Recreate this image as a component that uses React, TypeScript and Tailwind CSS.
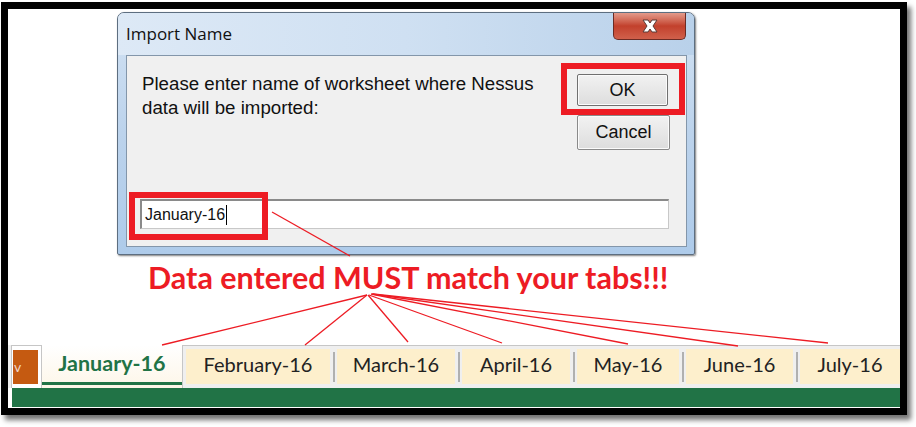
import React from "react";

const tabs = [
  { name: "February-16", w: "w-[144px]" },
  { name: "March-16", w: "w-[118px]" },
  { name: "April-16", w: "w-[108px]" },
  { name: "May-16", w: "w-[102px]" },
  { name: "June-16", w: "w-[107px]" },
  { name: "July-16", w: "w-[100px]" },
];

export default function App() {
  return (
    <div className="relative w-[916px] h-[427px] bg-white pl-[1px] pt-[2px]">
      <div className="w-[906px] h-[413px] border-[7px] border-black bg-white shadow-[4px_5px_5px_rgba(0,0,0,0.55)] flex flex-col">
        {/* Dialog */}
        <div className="ml-[109px] mt-[3px] w-[578px] h-[243px] rounded-t-[7px] rounded-b-[2px] border border-[#5d6e80] bg-gradient-to-b from-[#d2e2f3] via-[#bcd3ec] to-[#aecbea] flex flex-col shadow-[1px_1px_2px_rgba(0,0,0,0.5)]">
          <div className="h-[42px] flex items-start justify-between bg-gradient-to-r from-[#dde9f6] via-[#cfe0f2] to-[#b9d1ea] rounded-t-[6px]">
            <span
              className="pl-[8px] pt-[10px] text-[17px] leading-[22px] text-[#111]"
              style={{ fontFamily: '"Open Sans", "Noto Sans", sans-serif' }}
            >
              Import Name
            </span>
            <div className="mr-[8px] w-[73px] h-[27px] rounded-b-[5px] border border-t-0 border-[#6b2b24] bg-gradient-to-b from-[#e39a8b] via-[#c2402c] to-[#d0604b] flex items-center justify-center">
              <svg width="20" height="14" viewBox="0 0 20 14">
                <path
                  d="M3 1 L8 1 L10 4 L12 1 L17 1 L13 7 L17 13 L12 13 L10 10 L8 13 L3 13 L7 7 Z"
                  fill="#ffffff"
                  stroke="#5a3a36"
                  strokeWidth="1"
                  strokeLinejoin="round"
                />
              </svg>
            </div>
          </div>
          <div className="mx-[7px] ml-[8px] mb-[7px] flex-1 border border-[#8396aa] bg-[#f0f0f0] flex flex-col">
            <div className="flex justify-between">
              <p
                className="pl-[15px] pt-[16px] text-[18.7px] leading-[24px] text-[#111]"
                style={{ fontFamily: '"Liberation Sans", Arial, sans-serif' }}
              >
                Please enter name of worksheet where Nessus
                <br />
                data will be imported:
              </p>
              <div className="mr-[1px] mt-[7px] flex flex-col">
                <div className="border-[6px] border-[#ed1c24] pl-[10px] pr-[11px] pt-[5px] pb-[3px]">
                  <div
                    className="w-[91px] h-[32px] border border-[#707070] rounded-[2px] bg-gradient-to-b from-[#f2f2f2] to-[#dddddd] flex items-center justify-center text-[18px] text-[#111] shadow-[inset_0_0_0_1px_#fbfbfb]"
                    style={{ fontFamily: '"Liberation Sans", Arial, sans-serif' }}
                  >
                    OK
                  </div>
                </div>
                <div
                  className="ml-[16px] w-[93px] h-[35px] border border-[#8a8a8a] rounded-[2px] bg-gradient-to-b from-[#f2f2f2] to-[#dddddd] flex items-center justify-center text-[18px] text-[#111] shadow-[inset_0_0_0_1px_#fbfbfb]"
                  style={{ fontFamily: '"Liberation Sans", Arial, sans-serif' }}
                >
                  Cancel
                </div>
              </div>
            </div>
            <div className="flex-1" />
            <div className="ml-[13px] mr-[17px] mb-[17px] h-[30px] bg-white border border-[#c8c8c8] border-t-[#8a8a8a] border-t-2 border-l-2 border-l-[#8a8a8a] flex items-center pl-[3px]">
              <span
                className="text-[16px] text-[#111] leading-[20px]"
                style={{ fontFamily: '"Liberation Sans", Arial, sans-serif' }}
              >
                January-16
              </span>
              <span className="w-[1px] h-[20px] bg-black ml-[1px]" />
            </div>
          </div>
        </div>

        {/* Red annotation text */}
        <p
          className="ml-[140px] mt-[4px] text-[30.5px] leading-[36px] font-bold text-[#ed1c24]"
          style={{ fontFamily: 'Lato, "Open Sans", sans-serif' }}
        >
          Data entered MUST match your tabs!!!
        </p>

        <div className="flex-1" />

        {/* Sheet tabs */}
        <div className="h-[43px] pl-[3px] bg-[#efefef] flex items-stretch">
          <div className="w-[31px] border border-b-0 border-[#c6c6c6] bg-white pt-[4px] pl-[1px] pr-[3px] pb-[4px]">
            <div className="h-full bg-[#c55a11] flex items-center">
              <span className="text-[#f1d6c8] text-[14px] leading-none pl-[1px]" style={{ fontFamily: "Lato, sans-serif" }}>
                v
              </span>
            </div>
          </div>
          <div className="w-[143px] border-r border-[#c6c6c6] bg-gradient-to-b from-white to-[#fdf6e8] flex flex-col">
            <div
              className="flex-1 flex items-center justify-center text-[21.5px] font-bold text-[#217346]"
              style={{ fontFamily: 'Lato, "Open Sans", sans-serif' }}
            >
              January-16
            </div>
            <div className="h-[3px] bg-[#217346] mb-[3px]" />
          </div>
          <div className="flex-1 border-t border-[#c6c6c6] flex items-stretch pt-[3px] pb-[4px] pl-[3px]">
            {tabs.map((t, i) => (
              <React.Fragment key={t.name}>
                {i > 0 && (
                  <div className="w-[7px] flex justify-center items-center">
                    <div className="w-[2px] h-[30px] bg-[#b0b0b0]" />
                  </div>
                )}
                <div
                  className={`${t.w} bg-[#fdefcc] flex items-center justify-center pb-[5px] text-[20px] text-[#222]`}
                  style={{ fontFamily: 'Lato, "Open Sans", sans-serif' }}
                >
                  {t.name}
                </div>
              </React.Fragment>
            ))}
          </div>
        </div>
        <div className="h-[19px] ml-[4px] bg-[#217346]" />
        <div className="h-[1px]" />
      </div>

      {/* Annotation lines */}
      <svg
        className="absolute left-0 top-0 pointer-events-none"
        width="916"
        height="427"
        viewBox="0 0 916 427"
      >
        <rect x="132" y="195" width="133" height="42" fill="none" stroke="#ed1c24" strokeWidth="6" />
        <g stroke="#ed1c24" strokeWidth="1.3" fill="none">
          <line x1="272" y1="212" x2="350" y2="256" />
          <line x1="367" y1="295" x2="162" y2="345" />
          <line x1="367" y1="295" x2="305" y2="345" />
          <line x1="368" y1="295" x2="408" y2="342" />
          <line x1="369" y1="295" x2="502" y2="343" />
          <line x1="371" y1="294" x2="628" y2="344" />
          <line x1="372" y1="294" x2="738" y2="346" />
          <line x1="373" y1="294" x2="828" y2="343" />
        </g>
      </svg>
    </div>
  );
}
